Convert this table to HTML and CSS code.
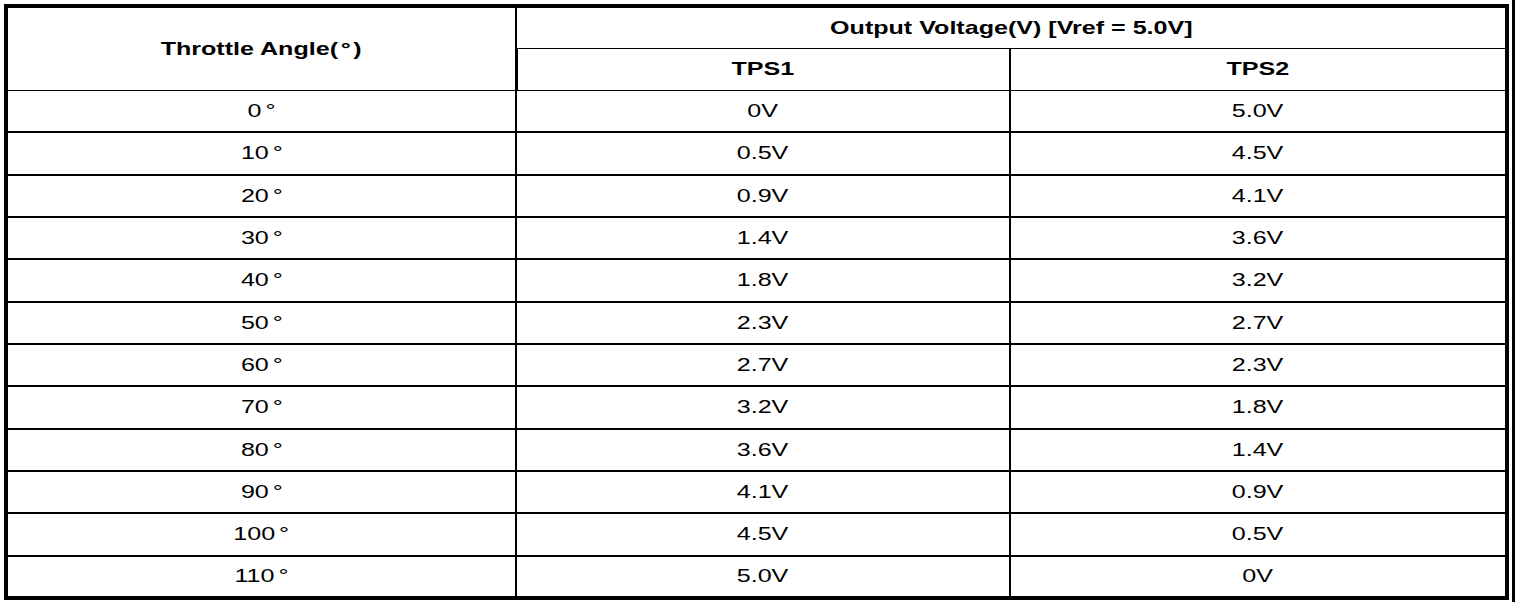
FILE: index.html
```html
<!DOCTYPE html>
<html lang="en">
<head>
  <meta charset="UTF-8">
  <title>TPS Output Voltage</title>
  <link rel="stylesheet" href="styles.css">
</head>
<body>

  <div class="sheet">
    <table class="tps-table">
      <colgroup>
        <col class="col-angle">
        <col class="col-tps1">
        <col class="col-tps2">
      </colgroup>
      <thead>
        <tr class="head-top">
          <th rowspan="2" class="angle-head"><span class="txt">Throttle Angle(<span class="deg-head">°</span>)</span></th>
          <th colspan="2" class="volt-head"><span class="txt">Output Voltage(V) [Vref = 5.0V]</span></th>
        </tr>
        <tr class="head-sub">
          <th class="tps1-head"><span class="txt">TPS1</span></th>
          <th><span class="txt">TPS2</span></th>
        </tr>
      </thead>
      <tbody>
        <tr class="row-thin"><td><span class="txt">0<span class="deg">°</span></span></td><td><span class="txt">0V</span></td><td><span class="txt">5.0V</span></td></tr>
        <tr><td><span class="txt">10<span class="deg">°</span></span></td><td><span class="txt">0.5V</span></td><td><span class="txt">4.5V</span></td></tr>
        <tr><td><span class="txt">20<span class="deg">°</span></span></td><td><span class="txt">0.9V</span></td><td><span class="txt">4.1V</span></td></tr>
        <tr><td><span class="txt">30<span class="deg">°</span></span></td><td><span class="txt">1.4V</span></td><td><span class="txt">3.6V</span></td></tr>
        <tr><td><span class="txt">40<span class="deg">°</span></span></td><td><span class="txt">1.8V</span></td><td><span class="txt">3.2V</span></td></tr>
        <tr><td><span class="txt">50<span class="deg">°</span></span></td><td><span class="txt">2.3V</span></td><td><span class="txt">2.7V</span></td></tr>
        <tr><td><span class="txt">60<span class="deg">°</span></span></td><td><span class="txt">2.7V</span></td><td><span class="txt">2.3V</span></td></tr>
        <tr><td><span class="txt">70<span class="deg">°</span></span></td><td><span class="txt">3.2V</span></td><td><span class="txt">1.8V</span></td></tr>
        <tr><td><span class="txt">80<span class="deg">°</span></span></td><td><span class="txt">3.6V</span></td><td><span class="txt">1.4V</span></td></tr>
        <tr><td><span class="txt">90<span class="deg">°</span></span></td><td><span class="txt">4.1V</span></td><td><span class="txt">0.9V</span></td></tr>
        <tr><td><span class="txt">100<span class="deg">°</span></span></td><td><span class="txt">4.5V</span></td><td><span class="txt">0.5V</span></td></tr>
        <tr><td><span class="txt">110<span class="deg">°</span></span></td><td><span class="txt">5.0V</span></td><td><span class="txt">0V</span></td></tr>
      </tbody>
    </table>
  </div>

</body>
</html>
```

FILE: styles.css
```css
/* page */
body {
  margin: 0;
  background-color: #fff;
  color: #000;
  font-family: "Liberation Sans", Arial, sans-serif;
}

/* sheet with the extra right rule from the print */
.sheet {
  width: 1501px;
  padding: 4px 7px 2px 4px;
  border-right: 3px solid #000;
}

/* table */
.tps-table {
  width: 1501px;
  height: 596px;
  table-layout: fixed;
  border-collapse: collapse;
  border: 4px solid #000;
}

.col-angle { width: 510px; }
.col-tps1 { width: 494px; }
.col-tps2 { width: 497px; }

.tps-table th,
.tps-table td {
  padding: 0;
  text-align: center;
  vertical-align: middle;
  font-size: 19px;
  line-height: 22px;
  border-left: 2px solid #000;
  border-top: 2px solid #000;
}

.tps-table th {
  font-weight: bold;
}

.tps-table td {
  font-weight: normal;
}

.tps-table tr {
  height: 42px;
}

/* header lines are thinner */
.head-sub th,
.row-thin td {
  border-top-width: 1px;
}

.angle-head {
  border-left: none;
}

.tps1-head {
  border-left-width: 3px !important;
}

.tps-table td:first-child {
  border-left: none;
}

/* the printed glyphs are wide, stretch them */
.txt {
  display: inline-block;
  transform: scaleX(1.32);
}

.deg {
  margin-left: 3px;
}

.deg-head {
  margin: 0 2px;
}
```
